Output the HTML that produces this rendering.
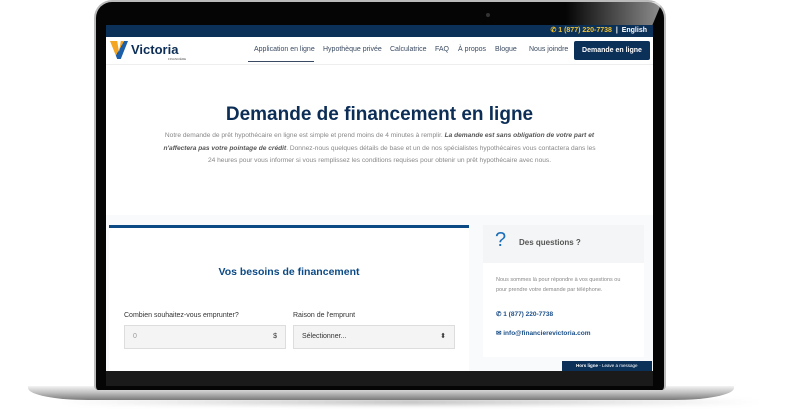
<!DOCTYPE html>
<html><head><meta charset="utf-8"><style>
*{margin:0;padding:0;box-sizing:border-box}
body{width:791px;height:412px;background:#fff;position:relative;overflow:hidden;font-family:"Liberation Sans",sans-serif}
.base{position:absolute;left:28px;top:386px;width:706px;height:14px;background:linear-gradient(#f4f4f4,#bdbdbd 50%,#7a7a7a);border-radius:0 0 60px 60px/0 0 12px 12px}
.shadow{position:absolute;left:60px;top:399px;width:700px;height:6px;background:linear-gradient(90deg,rgba(0,0,0,0),rgba(0,0,0,.25),rgba(0,0,0,0));filter:blur(2px)}
.lid{position:absolute;left:94px;top:0;width:572px;height:390px;background:#050505;border-radius:18px 18px 4px 4px;border:2px solid #bbb;border-bottom:none}
.glare{position:absolute;left:470px;top:0;width:96px;height:23px;background:linear-gradient(90deg,rgba(255,255,255,0),rgba(255,255,255,.55));clip-path:polygon(0 0,100% 0,90% 100%,0 100%)}
.cam{position:absolute;left:390px;top:11px;width:4px;height:4px;border-radius:50%;background:#333}
.chin{position:absolute;left:106px;top:371px;width:547px;height:15px;background:#1a1a1a}
.screen{position:absolute;left:106px;top:25px;width:547px;height:346px;background:#fff;overflow:hidden}
.top{height:12px;background:#0c3159;color:#fff;font-size:7px;font-weight:bold;text-align:right;padding-right:6px;line-height:12px}
.top span{color:#f2c230}
.nav{height:28px;border-bottom:1px solid #eee;position:relative;font-size:7px;color:#3a4a60}
.nav a{position:absolute;top:9px;white-space:nowrap}
.btn{position:absolute;left:468px;top:4px;width:76px;height:19px;background:#0c3159;color:#fff;font-weight:bold;text-align:center;line-height:19px;border-radius:2px}
h1{position:absolute;top:79px;width:100%;text-align:center;font-size:19px;color:#0c2e56;font-weight:bold}
.intro{position:absolute;left:55px;top:105px;width:437px;text-align:center;font-size:6.6px;line-height:12.5px;color:#888}
.intro b{color:#555;font-style:italic}
.card{position:absolute;left:3px;top:200px;width:360px;height:146px;background:#fff;border-top:3px solid #0c4a85}
.card h2{position:absolute;top:38px;width:100%;text-align:center;font-size:10.5px;color:#0c4a85}
.lab{position:absolute;top:84px;font-size:7px;color:#333}
.inp{position:absolute;top:97px;width:162px;height:24px;background:#f4f4f4;border:1px solid #ddd;font-size:7px;line-height:22px;padding:0 8px;color:#999}
.side{position:absolute;left:377px;top:200px;width:161px;height:132px;background:#fff}
.sh{height:38px;background:#f4f5f6;position:relative;font-size:8px;color:#555;font-weight:bold}
.chat{position:absolute;left:456px;top:336px;width:90px;height:10px;background:#0c3159;color:#fff;font-size:4.5px;line-height:10px;padding-left:14px}
</style></head><body>
<div class="shadow"></div>
<div class="base"></div>
<div class="lid"><div class="glare"></div><div class="cam"></div></div>
<div class="chin"></div>
<div class="screen">
<div class="top"><span>✆ 1 (877) 220-7738</span> &nbsp;|&nbsp; English</div>
<div class="nav">
<div style="position:absolute;left:4px;top:4px;width:18px;height:18px;background:linear-gradient(120deg,#f4a623 50%,#1c5fa8 50%);clip-path:polygon(0 0,40% 0,50% 60%,60% 0,100% 0,60% 100%,40% 100%)"></div>
<div style="position:absolute;left:25px;top:5px;font-size:13px;font-weight:bold;color:#0c2e56">Victoria</div>
<div style="position:absolute;left:62px;top:20px;font-size:3px;color:#555">FINANCIÈRE</div>
<a style="left:148px">Application en ligne</a>
<div style="position:absolute;left:142px;top:24px;width:66px;height:1px;background:#3a4a60"></div>
<a style="left:217px">Hypothèque privée</a>
<a style="left:284px">Calculatrice</a>
<a style="left:329px">FAQ</a>
<a style="left:352px">À propos</a>
<a style="left:389px">Blogue</a>
<a style="left:423px">Nous joindre</a>
<div class="btn">Demande en ligne</div>
</div>
<h1>Demande de financement en ligne</h1>
<div class="intro">Notre demande de prêt hypothécaire en ligne est simple et prend moins de 4 minutes à remplir. <b>La demande est sans obligation de votre part et n'affectera pas votre pointage de crédit</b>. Donnez-nous quelques détails de base et un de nos spécialistes hypothécaires vous contactera dans les 24 heures pour vous informer si vous remplissez les conditions requises pour obtenir un prêt hypothécaire avec nous.</div>
<div style="position:absolute;left:0;top:190px;width:547px;height:156px;background:#f9fafb"></div>
<div class="card">
<h2>Vos besoins de financement</h2>
<div class="lab" style="left:15px">Combien souhaitez-vous emprunter?</div>
<div class="lab" style="left:184px">Raison de l'emprunt</div>
<div class="inp" style="left:15px">0<span style="float:right;color:#333">$</span></div>
<div class="inp" style="left:184px;color:#333">Sélectionner...<span style="float:right">⬍</span></div>
</div>
<div class="side">
<div class="sh"><span style="position:absolute;left:12px;top:4px;font-size:20px;color:#1c6fb8;font-weight:normal">?</span><span style="position:absolute;left:36px;top:13px">Des questions ?</span></div>
<div style="padding:12px 13px;font-size:5.5px;line-height:10px;color:#888">Nous sommes là pour répondre à vos questions ou pour prendre votre demande par téléphone.</div>
<div style="position:absolute;left:13px;top:85px;font-size:6.5px;color:#1c4f88;font-weight:bold">✆ 1 (877) 220-7738</div>
<div style="position:absolute;left:13px;top:104px;font-size:6.5px;color:#1c4f88;font-weight:bold">✉ info@financierevictoria.com</div>
</div>
<div class="chat"><b>Hors ligne</b> - Leave a message</div>
</div>
</body></html>
